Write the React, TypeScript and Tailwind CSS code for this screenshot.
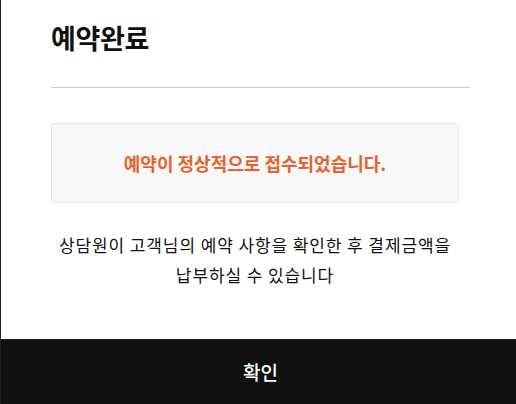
export default function App() {
  const font = { fontFamily: '"Noto Sans CJK KR", "Noto Sans", sans-serif' };
  return (
    <div className="w-[516px] h-[404px] overflow-hidden bg-white" style={font}>
      <div className="w-[520px] h-[404px] border-l border-[#222] flex flex-col">
        <div className="flex-1 px-[50px] pt-[20px]">
          <h1 className="text-[27px] leading-[36px] font-bold text-[#111] tracking-[-0.3px]">예약완료</h1>
          <div className="mt-[31px] h-px bg-[#cccccc]" />
          <div className="mt-[35px] w-[408px] h-[80px] rounded-[4px] border border-[#e6e6e6] bg-[#f8f8f8] flex items-center justify-center">
            <p className="text-[18px] font-bold text-[#e8602c]">예약이 정상적으로 접수되었습니다.</p>
          </div>
          <p className="mt-[27px] w-[408px] text-center text-[17px] leading-[30px] text-[#111] tracking-[0.9px]">
            상담원이 고객님의 예약 사항을 확인한 후 결제금액을
            <br />
            납부하실 수 있습니다
          </p>
        </div>
        <button className="h-[65px] w-full bg-[#111] border-t border-[#222] text-white text-[19px] font-medium">
          확인
        </button>
      </div>
    </div>
  );
}
